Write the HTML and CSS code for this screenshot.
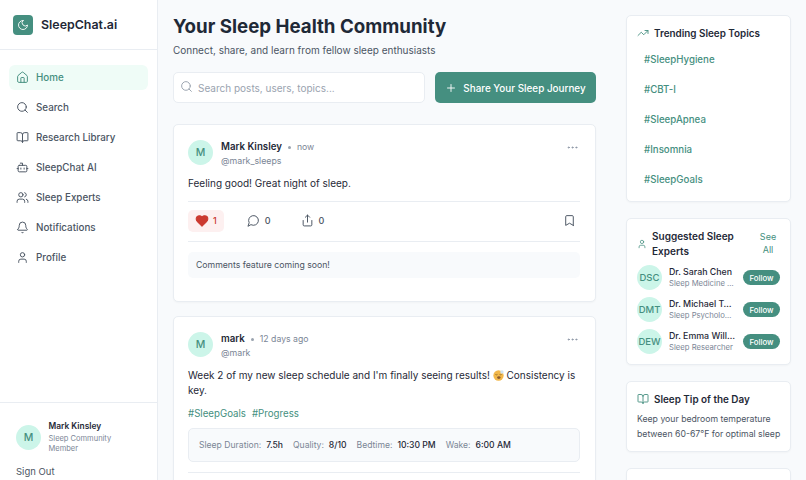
FILE: index.html
```html
<!DOCTYPE html>
<html lang="en">
<head>
    <meta charset="UTF-8">
    <meta name="viewport" content="width=device-width, initial-scale=1.0">
    <title>SleepChat.ai</title>
    <link rel="stylesheet" href="styles.css">
</head>
<body>

<div class="app">
    <aside class="sidebar">
        <div class="brand">
            <span class="brand-logo">
                <svg class="icon" viewBox="0 0 24 24"><path d="M12 3a6 6 0 0 0 9 9 9 9 0 1 1-9-9Z"/></svg>
            </span>
            <span class="brand-name">SleepChat.ai</span>
        </div>

        <nav class="nav">
            <a class="nav-item active">
                <svg class="icon" viewBox="0 0 24 24"><path d="M15 21v-8a1 1 0 0 0-1-1h-4a1 1 0 0 0-1 1v8"/><path d="M3 10a2 2 0 0 1 .709-1.528l7-5.999a2 2 0 0 1 2.582 0l7 5.999A2 2 0 0 1 21 10v9a2 2 0 0 1-2 2H5a2 2 0 0 1-2-2z"/></svg>
                Home
            </a>
            <a class="nav-item">
                <svg class="icon" viewBox="0 0 24 24"><circle cx="11" cy="11" r="8"/><path d="m21 21-4.3-4.3"/></svg>
                Search
            </a>
            <a class="nav-item">
                <svg class="icon" viewBox="0 0 24 24"><path d="M12 7v14"/><path d="M3 18a1 1 0 0 1-1-1V4a1 1 0 0 1 1-1h5a4 4 0 0 1 4 4 4 4 0 0 1 4-4h5a1 1 0 0 1 1 1v13a1 1 0 0 1-1 1h-6a3 3 0 0 0-3 3 3 3 0 0 0-3-3z"/></svg>
                Research Library
            </a>
            <a class="nav-item">
                <svg class="icon" viewBox="0 0 24 24"><path d="M12 8V4H8"/><rect x="4" y="8" width="16" height="12" rx="2"/><path d="M2 14h2"/><path d="M20 14h2"/><path d="M15 13v2"/><path d="M9 13v2"/></svg>
                SleepChat AI
            </a>
            <a class="nav-item">
                <svg class="icon" viewBox="0 0 24 24"><path d="M16 21v-2a4 4 0 0 0-4-4H6a4 4 0 0 0-4 4v2"/><circle cx="9" cy="7" r="4"/><path d="M22 21v-2a4 4 0 0 0-3-3.87"/><path d="M16 3.13a4 4 0 0 1 0 7.75"/></svg>
                Sleep Experts
            </a>
            <a class="nav-item">
                <svg class="icon" viewBox="0 0 24 24"><path d="M10.268 21a2 2 0 0 0 3.464 0"/><path d="M3.262 15.326A1 1 0 0 0 4 17h16a1 1 0 0 0 .74-1.673C19.41 13.956 18 12.499 18 8A6 6 0 0 0 6 8c0 4.499-1.411 5.956-2.738 7.326"/></svg>
                Notifications
            </a>
            <a class="nav-item">
                <svg class="icon" viewBox="0 0 24 24"><path d="M19 21v-2a4 4 0 0 0-4-4H9a4 4 0 0 0-4 4v2"/><circle cx="12" cy="7" r="4"/></svg>
                Profile
            </a>
        </nav>

        <div class="sidebar-user">
            <div class="user-row">
                <span class="avatar">M</span>
                <div class="user-info">
                    <div class="user-name">Mark Kinsley</div>
                    <div class="user-role">Sleep Community Member</div>
                </div>
            </div>
            <a class="sign-out">Sign Out</a>
        </div>
    </aside>

    <main class="main">
        <h1>Your Sleep Health Community</h1>
        <p class="subtitle">Connect, share, and learn from fellow sleep enthusiasts</p>

        <div class="toolbar">
            <label class="search-box">
                <svg class="icon" viewBox="0 0 24 24"><circle cx="11" cy="11" r="8"/><path d="m21 21-4.3-4.3"/></svg>
                <input type="text" placeholder="Search posts, users, topics...">
            </label>
            <button class="btn-share">
                <svg class="icon" viewBox="0 0 24 24"><path d="M5 12h14"/><path d="M12 5v14"/></svg>
                Share Your Sleep Journey
            </button>
        </div>

        <article class="post">
            <div class="post-head">
                <span class="avatar">M</span>
                <div class="post-meta">
                    <div class="post-line"><b>Mark Kinsley</b><i class="dot"></i><span>now</span></div>
                    <div class="post-handle">@mark_sleeps</div>
                </div>
                <svg class="icon more" viewBox="0 0 24 24"><circle cx="12" cy="12" r="1"/><circle cx="19" cy="12" r="1"/><circle cx="5" cy="12" r="1"/></svg>
            </div>
            <p class="post-text">Feeling good! Great night of sleep.</p>
            <div class="post-actions">
                <span class="action liked">
                    <svg class="icon" viewBox="0 0 24 24"><path d="M19 14c1.49-1.46 3-3.21 3-5.5A5.5 5.5 0 0 0 16.5 3c-1.76 0-3 .5-4.5 2-1.5-1.5-2.74-2-4.5-2A5.5 5.5 0 0 0 2 8.5c0 2.3 1.5 4.05 3 5.5l7 7Z"/></svg>
                    1
                </span>
                <span class="action">
                    <svg class="icon" viewBox="0 0 24 24"><path d="M7.9 20A9 9 0 1 0 4 16.1L2 22Z"/></svg>
                    0
                </span>
                <span class="action">
                    <svg class="icon" viewBox="0 0 24 24"><path d="M4 12v8a2 2 0 0 0 2 2h12a2 2 0 0 0 2-2v-8"/><path d="m16 6-4-4-4 4"/><path d="M12 2v13"/></svg>
                    0
                </span>
                <svg class="icon bookmark" viewBox="0 0 24 24"><path d="m19 21-7-4-7 4V5a2 2 0 0 1 2-2h10a2 2 0 0 1 2 2v16z"/></svg>
            </div>
            <div class="comments-note">Comments feature coming soon!</div>
        </article>

        <article class="post">
            <div class="post-head">
                <span class="avatar">M</span>
                <div class="post-meta">
                    <div class="post-line"><b>mark</b><i class="dot"></i><span>12 days ago</span></div>
                    <div class="post-handle">@mark</div>
                </div>
                <svg class="icon more" viewBox="0 0 24 24"><circle cx="12" cy="12" r="1"/><circle cx="19" cy="12" r="1"/><circle cx="5" cy="12" r="1"/></svg>
            </div>
            <p class="post-text">Week 2 of my new sleep schedule and I'm finally seeing results!
                <svg class="emoji" viewBox="0 0 16 16"><circle cx="8" cy="8" r="7.5" fill="#f2b84b"/><path d="M3.5 6.5q1.5 1 3 0M9.5 6.5q1.5 1 3 0" fill="none" stroke="#7a5a20"/><ellipse cx="8.5" cy="11" rx="2.5" ry="2" fill="#8a5a30"/><circle cx="13" cy="3" r="2.5" fill="#cfe3f2"/></svg>
                Consistency is key.</p>
            <div class="post-tags"><a>#SleepGoals</a><a>#Progress</a></div>
            <div class="sleep-stats">
                <span>Sleep Duration: <b>7.5h</b></span>
                <span>Quality: <b>8/10</b></span>
                <span>Bedtime: <b>10:30 PM</b></span>
                <span>Wake: <b>6:00 AM</b></span>
            </div>
            <div class="post-actions"></div>
        </article>
    </main>

    <aside class="rail">
        <section class="card topics-card">
            <h2 class="card-title">
                <svg class="icon" viewBox="0 0 24 24"><path d="M16 7h6v6"/><path d="m22 7-8.5 8.5-5-5L2 17"/></svg>
                Trending Sleep Topics
            </h2>
            <ul class="topics">
                <li>#SleepHygiene</li>
                <li>#CBT-I</li>
                <li>#SleepApnea</li>
                <li>#Insomnia</li>
                <li>#SleepGoals</li>
            </ul>
        </section>

        <section class="card">
            <div class="experts-head">
                <svg class="icon" viewBox="0 0 24 24"><path d="M19 21v-2a4 4 0 0 0-4-4H9a4 4 0 0 0-4 4v2"/><circle cx="12" cy="7" r="4"/></svg>
                <h2>Suggested Sleep Experts</h2>
                <a>See All</a>
            </div>
            <div class="expert">
                <span class="avatar">DSC</span>
                <div class="expert-info">
                    <div class="expert-name">Dr. Sarah Chen</div>
                    <div class="expert-role">Sleep Medicine Specialist</div>
                </div>
                <button class="btn-follow">Follow</button>
            </div>
            <div class="expert">
                <span class="avatar">DMT</span>
                <div class="expert-info">
                    <div class="expert-name">Dr. Michael Torres</div>
                    <div class="expert-role">Sleep Psychologist</div>
                </div>
                <button class="btn-follow">Follow</button>
            </div>
            <div class="expert">
                <span class="avatar">DEW</span>
                <div class="expert-info">
                    <div class="expert-name">Dr. Emma Williams</div>
                    <div class="expert-role">Sleep Researcher</div>
                </div>
                <button class="btn-follow">Follow</button>
            </div>
        </section>

        <section class="card">
            <h2 class="card-title tip-title">
                <svg class="icon" viewBox="0 0 24 24"><path d="M12 7v14"/><path d="M3 18a1 1 0 0 1-1-1V4a1 1 0 0 1 1-1h5a4 4 0 0 1 4 4 4 4 0 0 1 4-4h5a1 1 0 0 1 1 1v13a1 1 0 0 1-1 1h-6a3 3 0 0 0-3 3 3 3 0 0 0-3-3z"/></svg>
                Sleep Tip of the Day
            </h2>
            <p class="tip-text">Keep your bedroom temperature between 60-67°F for optimal sleep</p>
        </section>

        <section class="card">
            <svg class="icon stub-icon" viewBox="0 0 24 24"><circle cx="12" cy="12" r="9"/></svg>
        </section>
    </aside>
</div>

</body>
</html>
```

FILE: styles.css
```css
:root {
    --background: #f8fafc;
    --border: #e9edf2;
    --accent: #458f80;
    --accent-soft: #ccf5e9;
    --text: #1f2937;
    --muted: #4b5563;
    --soft: #7b8696;
}

* {
    box-sizing: border-box;
    margin: 0;
    padding: 0;
}

html, body {
    height: 100%;
    overflow: hidden;
}

body {
    font-family: 'Inter', sans-serif;
    background: var(--background);
    color: var(--text);
    font-size: 12px;
}

.icon {
    width: 16px;
    height: 16px;
    flex-shrink: 0;
    fill: none;
    stroke: currentColor;
    stroke-width: 1.8;
    stroke-linecap: round;
    stroke-linejoin: round;
}

.app {
    display: flex;
    height: 480px;
    overflow: hidden;
}

/* Sidebar */
.sidebar {
    width: 158px;
    flex-shrink: 0;
    background: #fff;
    border-right: 1px solid var(--border);
    display: flex;
    flex-direction: column;
}

.brand {
    height: 50px;
    flex-shrink: 0;
    display: flex;
    align-items: center;
    gap: 8px;
    padding: 0 13px;
    border-bottom: 1px solid var(--border);
}

.brand-logo {
    width: 20px;
    height: 20px;
    border-radius: 4px;
    background: var(--accent);
    color: #fff;
    display: flex;
    align-items: center;
    justify-content: center;
}

.brand-logo .icon {
    width: 12px;
    height: 12px;
}

.brand-name {
    font-size: 12.4px;
    font-weight: 600;
}

.nav {
    flex: 1;
    padding: 15px 9px;
    display: flex;
    flex-direction: column;
    gap: 5px;
}

.nav-item {
    height: 25px;
    border-radius: 6px;
    padding: 0 7px;
    display: flex;
    align-items: center;
    gap: 7px;
    font-size: 9.8px;
    font-weight: 500;
    color: var(--muted);
}

.nav-item .icon {
    width: 13px;
    height: 13px;
}

.nav-item.active {
    background: #effcf7;
    color: var(--accent);
}

.sidebar-user {
    height: 78px;
    flex-shrink: 0;
    border-top: 1px solid var(--border);
    padding: 17px 16px 0;
}

.user-row {
    display: flex;
    align-items: center;
    gap: 7.5px;
}

.avatar {
    width: 25px;
    height: 25px;
    border-radius: 50%;
    flex-shrink: 0;
    background: var(--accent-soft);
    color: var(--accent);
    font-size: 10.5px;
    font-weight: 500;
    display: flex;
    align-items: center;
    justify-content: center;
}

.user-name {
    font-size: 8.4px;
    font-weight: 600;
    line-height: 13px;
}

.user-role {
    font-size: 7.5px;
    line-height: 10px;
    color: var(--soft);
    margin-top: 1px;
}

.sign-out {
    display: block;
    margin-top: 12px;
    font-size: 9.5px;
    line-height: 12px;
    color: var(--muted);
}

/* Main */
.main {
    width: 438px;
    flex-shrink: 0;
    padding: 15px 0 0 15px;
}

h1 {
    font-size: 18.7px;
    font-weight: 700;
    line-height: 24px;
}

.subtitle {
    font-size: 10px;
    line-height: 14px;
    margin-top: 4px;
    color: var(--muted);
}

.toolbar {
    display: flex;
    gap: 10px;
    margin-top: 15px;
}

.search-box {
    flex: 1;
    height: 31px;
    background: #fff;
    border: 1px solid var(--border);
    border-radius: 5px;
    display: flex;
    align-items: center;
    gap: 5px;
    padding: 0 6px;
    color: #9aa3af;
}

.search-box .icon {
    width: 13px;
    height: 13px;
    margin-top: -2px;
}

.search-box input {
    border: none;
    outline: none;
    background: none;
    width: 100%;
    font-family: inherit;
    font-size: 10px;
}

.search-box input::placeholder {
    color: #9aa3af;
}

.btn-share {
    width: 161px;
    height: 31px;
    border: none;
    border-radius: 5px;
    background: var(--accent);
    color: #fff;
    font-family: inherit;
    font-size: 9.9px;
    font-weight: 500;
    display: flex;
    align-items: center;
    justify-content: center;
    gap: 6px;
}

.btn-share .icon {
    width: 12px;
    height: 12px;
}

.post {
    background: #fff;
    border: 1px solid var(--border);
    border-radius: 5px;
    padding: 15px 15px 0 14px;
    margin-top: 21px;
    height: 178px;
    box-shadow: 0 1px 2px rgba(0, 0, 0, 0.03);
}

.post + .post {
    margin-top: 14px;
    height: 200px;
}

.post-head {
    display: flex;
    gap: 8px;
}

.post-meta {
    flex: 1;
}

.post-line {
    display: flex;
    align-items: center;
    font-size: 8.7px;
    line-height: 14px;
    color: var(--soft);
}

.post-line b {
    font-size: 9.7px;
    font-weight: 600;
    color: var(--text);
}

.dot {
    width: 3px;
    height: 3px;
    border-radius: 50%;
    background: #9aa3af;
    margin: 0 6px;
}

.post-handle {
    font-size: 8.8px;
    line-height: 13px;
    color: var(--soft);
}

.more {
    width: 13px;
    height: 13px;
    color: #8a94a3;
    margin: 1px 1px 0 0;
}

.post-text {
    font-size: 10px;
    line-height: 15px;
    margin-top: 9px;
    color: var(--text);
}

.emoji {
    width: 11px;
    height: 11px;
    vertical-align: -2px;
}

.post-actions {
    display: flex;
    align-items: center;
    gap: 16px;
    margin-top: 10px;
    padding-bottom: 2px;
    border-top: 1px solid var(--border);
    border-bottom: 1px solid var(--border);
    height: 41px;
}

.action {
    height: 22px;
    display: flex;
    align-items: center;
    gap: 5px;
    font-size: 9px;
    font-weight: 500;
    color: var(--muted);
    padding: 0 7px;
}

.action .icon {
    width: 13px;
    height: 13px;
}

.action.liked {
    background: #fdf0f0;
    border-radius: 5px;
    color: #cb3a30;
    gap: 4px;
}

.action.liked .icon {
    width: 14px;
    height: 14px;
    fill: currentColor;
}

.bookmark {
    width: 13px;
    height: 13px;
    margin-left: auto;
    margin-right: 4px;
    color: var(--muted);
}

.comments-note {
    margin-top: 10px;
    background: var(--background);
    border-radius: 5px;
    height: 26px;
    line-height: 26px;
    padding: 0 8px;
    font-size: 8.7px;
    color: var(--muted);
}

.post-tags {
    display: flex;
    gap: 6px;
    margin-top: 8px;
    font-size: 9.7px;
    line-height: 15px;
    color: var(--accent);
}

.sleep-stats {
    display: flex;
    gap: 10px;
    margin-top: 7px;
    height: 34px;
    padding: 0 10px;
    align-items: center;
    background: var(--background);
    border: 1px solid var(--border);
    border-radius: 5px;
    font-size: 8.6px;
    color: var(--soft);
}

.sleep-stats b {
    font-weight: 500;
    color: var(--text);
    margin-left: 2.5px;
}

/* Right column */
.rail {
    width: 165px;
    flex-shrink: 0;
    margin-left: 30px;
    padding-top: 15px;
    display: flex;
    flex-direction: column;
    gap: 16px;
}

.card {
    background: #fff;
    border: 1px solid var(--border);
    border-radius: 5px;
    padding: 10px;
    flex-shrink: 0;
    box-shadow: 0 1px 2px rgba(0, 0, 0, 0.03);
}

.topics-card {
    padding-bottom: 6px;
}

.card-title {
    display: flex;
    align-items: center;
    gap: 5px;
    font-size: 9.9px;
    font-weight: 600;
    line-height: 14px;
}

.card-title .icon {
    width: 12px;
    height: 12px;
    color: var(--accent);
}

.topics {
    list-style: none;
    margin-top: 5px;
}

.topics li {
    height: 30px;
    line-height: 30px;
    padding-left: 7px;
    font-size: 9.7px;
    font-weight: 500;
    color: var(--accent);
}

.experts-head {
    display: flex;
    align-items: center;
    gap: 5px;
    margin-bottom: 7px;
}

.experts-head .icon {
    width: 10px;
    height: 10px;
    color: var(--accent);
}

.experts-head h2 {
    flex: 1;
    font-size: 10px;
    font-weight: 600;
    line-height: 14.5px;
}

.experts-head a {
    width: 20px;
    font-size: 9px;
    line-height: 12.5px;
    text-align: center;
    color: var(--accent);
    margin-right: 2px;
}

.expert {
    display: flex;
    align-items: center;
    gap: 8px;
    height: 25px;
    margin-bottom: 7px;
}

.expert:last-child {
    margin-bottom: 0;
}

.expert .avatar {
    font-size: 9.5px;
    margin-right: -1px;
}

.expert-info {
    flex: 1;
    min-width: 0;
}

.expert-name, .expert-role {
    white-space: nowrap;
    overflow: hidden;
    text-overflow: ellipsis;
}

.expert-name {
    font-size: 8.8px;
    font-weight: 500;
    line-height: 12px;
}

.expert-role {
    font-size: 7.7px;
    line-height: 11px;
    color: var(--soft);
}

.btn-follow {
    width: 37px;
    height: 15px;
    flex-shrink: 0;
    border: none;
    border-radius: 8px;
    background: var(--accent);
    color: #fff;
    font-family: inherit;
    font-size: 7.8px;
    font-weight: 500;
}

.tip-title {
    margin-bottom: 6px;
}

.tip-text {
    font-size: 8.7px;
    line-height: 14.5px;
    margin-right: -4px;
    color: var(--muted);
}

.stub-icon {
    display: block;
    width: 12px;
    height: 12px;
    color: var(--soft);
}
```
